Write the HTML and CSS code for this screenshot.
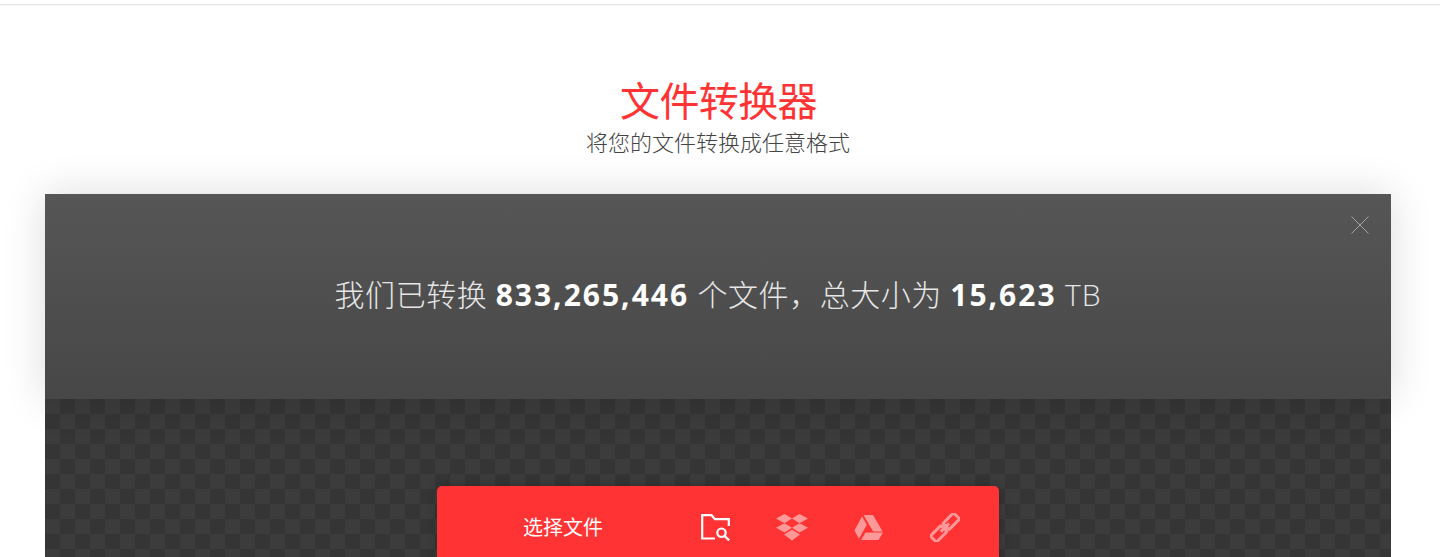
FILE: index.html
```html
<!DOCTYPE html>
<html>
<head>
	<meta charset="utf-8">
	<title>文件转换器</title>
	<link rel="stylesheet" href="styles.css">
</head>
<body>
<div class="topbar"></div>
<div class="intro">
	<h1 class="intro-title">文件转换器</h1>
	<p class="intro-sub">将您的文件转换成任意格式</p>
</div>
<div class="tool">
	<div class="stats">
		<svg class="stats-close" viewBox="0 0 18 18" width="18" height="18">
			<path d="M0.5 0.5L17.5 17.5M17.5 0.5L0.5 17.5" fill="none" stroke="#a3a3a3" stroke-width="1"/>
		</svg>
		<p class="stats-text">我们已转换 <b>833,265,446</b> 个文件，总大小为 <b>15,623</b> <span class="stats-unit">TB</span></p>
	</div>
	<div class="drop">
		<div class="picker">
			<span class="picker-label">选择文件</span>
			<div class="picker-icons">
				<svg class="icon" viewBox="0 0 29 27" width="29" height="27">
					<path d="M14 24.5H1.2V1.2H10.5L14 5.2H27.8V12" fill="none" stroke="#fff" stroke-width="2.2"/>
					<circle cx="20.5" cy="18.7" r="4.2" fill="none" stroke="#fff" stroke-width="2.2"/>
					<path d="M23.6 22L28.2 26.4" fill="none" stroke="#fff" stroke-width="2.4"/>
				</svg>
				<svg class="icon icon-dim" viewBox="0 0 32 27" width="32" height="27">
					<path d="M8.5 0L16 4.6L8.5 9.2L0 4.6ZM23.5 0L32 4.6L23.5 9.2L16 4.6ZM8.5 9.2L16 13.8L8.5 18.4L0 13.8ZM23.5 9.2L32 13.8L23.5 18.4L16 13.8ZM16 15.8L24 20.6L16 26.5L8 20.6Z" fill="#fff"/>
				</svg>
				<svg class="icon icon-dim" viewBox="0 0 29 25" width="29" height="25">
					<path d="M9.5 0H19L28.6 16.5H19.2ZM8 1.6L12.8 9.8L5 23.8L0.4 15.6ZM7 25L11.6 17.4H29L24.5 25Z" fill="#fff"/>
				</svg>
				<svg class="icon icon-dim icon-link" viewBox="0 0 30 30" width="30" height="29">
					<g fill="none" stroke="#fff" stroke-width="3" transform="rotate(-45 15 15)">
						<rect x="-2" y="10.5" width="15.5" height="9" rx="1"/>
						<rect x="16.5" y="10.5" width="15.5" height="9" rx="1"/>
						<path d="M9 15H21"/>
					</g>
				</svg>
			</div>
		</div>
	</div>
</div>
</body>
</html>
```

FILE: styles.css
```css
html, body{
	margin: 0;
	padding: 0;
	height: 557px;
	overflow: hidden;
	background-color: #fff;
	font-family: "Open Sans", "Noto Sans CJK SC", sans-serif;
}
.topbar{
	height: 4px;
	border-bottom: 1px solid #e6e6e6;
	box-shadow: 0 1px 2px rgba(0,0,0,0.04);
}
.intro{
	padding-top: 71px;
	height: 118px;
	text-align: center;
}
.intro-title{
	margin: 0;
	padding-right: 3px;
	font-size: 40px;
	line-height: 50px;
	font-weight: 400;
	letter-spacing: -0.6px;
	color: #ff3333;
}
.intro-sub{
	margin: 0;
	padding-right: 4px;
	font-size: 22px;
	line-height: 33px;
	font-weight: 300;
	color: #444;
}
.tool{
	margin: 0 49px 0 45px;
}
.stats{
	position: relative;
	height: 205px;
	background: linear-gradient(#565656, #474747);
	box-shadow: 0 0 40px rgba(0,0,0,0.14);
	text-align: center;
}
.stats-close{
	position: absolute;
	top: 22px;
	right: 22px;
}
.stats-text{
	margin: 0;
	padding-top: 78px;
	font-size: 30px;
	line-height: 46px;
	font-weight: 300;
	letter-spacing: 0.55px;
	color: #e6e6e6;
}
.stats-text b{
	font-weight: 700;
	letter-spacing: 2px;
	color: #fff;
}
.stats-unit{
	letter-spacing: 1px;
}
.drop{
	height: 300px;
	padding-top: 87px;
	box-sizing: border-box;
	background-color: #3c3c3c;
	background-image: conic-gradient(#353535 25%, transparent 0 50%, #353535 0 75%, transparent 0);
	background-size: 30px 30px;
}
.picker{
	display: flex;
	align-items: center;
	width: 562px;
	height: 82px;
	margin-left: 392px;
	border-radius: 5px 5px 0 0;
	background-color: #ff3333;
	box-shadow: 0 0 12px rgba(0,0,0,0.2);
}
.picker-label{
	width: 264px;
	padding: 0 0 2px 86px;
	box-sizing: border-box;
	font-size: 20px;
	font-weight: 400;
	color: #fff;
}
.picker-icons{
	display: flex;
	align-items: center;
	gap: 46px;
}
.icon-dim{
	opacity: 0.5;
}
.icon-link{
	margin-left: 1px;
}
```
